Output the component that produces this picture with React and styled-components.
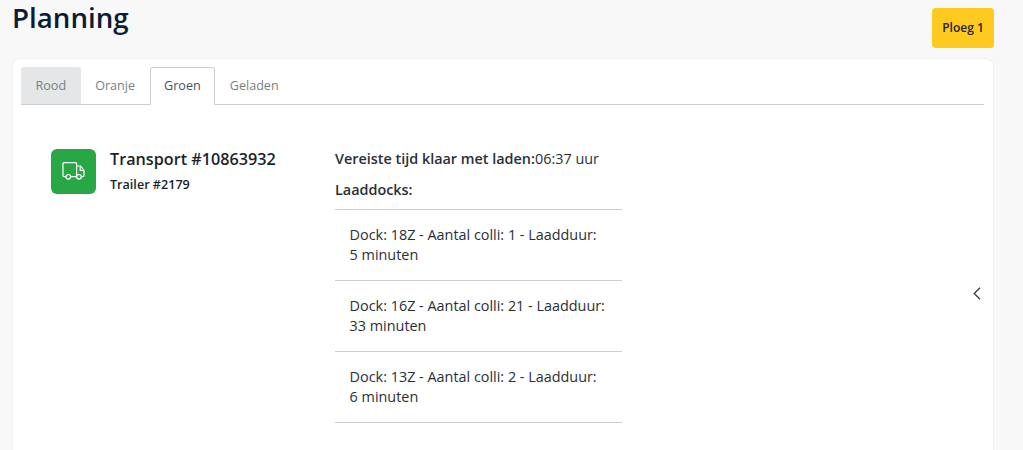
import React from 'react'
import styled, { createGlobalStyle } from 'styled-components'

const GlobalStyle = createGlobalStyle`
  html, body {
    margin: 0;
    padding: 0;
    height: 450px;
    overflow: hidden;
    background: #f8f8f8;
    font-family: "Open Sans", "Liberation Sans", sans-serif;
    color: #212529;
  }
`

const Page = styled.div`
  display: flex;
  flex-direction: column;
  gap: 10px;
  padding: 0 29px 0 12px;
  height: 450px;
  overflow: hidden;
`

const Header = styled.header`
  display: flex;
  justify-content: space-between;
  align-items: flex-start;
  height: 48px;
`

const Title = styled.h1`
  margin: 0;
  font-size: 27.7px;
  line-height: 34px;
  font-weight: 600;
  color: #0d1c36;
`

const TeamButton = styled.button`
  margin-top: 8px;
  width: 62px;
  height: 40px;
  padding: 0 0 2px;
  border: 0;
  border-radius: 4px;
  background: #ffca1f;
  color: #212529;
  font: 600 12px "Open Sans", sans-serif;
`

const Card = styled.section`
  position: relative;
  flex: 1;
  box-sizing: border-box;
  padding: 8px 9px 0 8px;
  background: #fff;
  border: 1px solid #f1f1f1;
  border-bottom: 0;
  border-radius: 8px 8px 0 0;
`

const Tabs = styled.nav`
  display: flex;
  height: 38px;
  box-sizing: border-box;
  border-bottom: 1px solid #ccced1;
`

const Tab = styled.div`
  box-sizing: border-box;
  height: ${p => (p.$active ? '38px' : '37px')};
  padding: 0 13.5px;
  line-height: 36px;
  font-size: 12.6px;
  color: ${p => (p.$active ? '#495057' : '#7a7f85')};
  background: ${p => (p.$muted ? '#e5e6e8' : p.$active ? '#fff' : 'transparent')};
  border: 1px solid ${p => (p.$active ? '#ccced1' : 'transparent')};
  border-bottom: ${p => (p.$active ? '1px solid #fff' : '0')};
  border-radius: 3px 3px 0 0;
`

const Body = styled.div`
  display: flex;
  padding: 44px 0 0 30px;
`

const Summary = styled.div`
  display: flex;
  gap: 14px;
  width: 284px;
  flex-shrink: 0;
`

const IconTile = styled.div`
  display: flex;
  align-items: center;
  justify-content: center;
  width: 45px;
  height: 45px;
  border-radius: 6px;
  background: #28a745;
  color: #fff;
`

const TransportName = styled.div`
  font-size: 16.2px;
  line-height: 20px;
  font-weight: 600;
  color: #1a1f29;
`

const TrailerName = styled.div`
  margin-top: 7px;
  font-size: 12.6px;
  line-height: 17px;
  font-weight: 600;
  color: #1a1f29;
`

const Details = styled.div`
  width: 287px;
`

const Label = styled.div`
  margin-top: ${p => p.$gap || 0}px;
  font-size: 14.4px;
  line-height: 19px;
  font-weight: 600;
  color: #2a2f36;
  & > span {
    font-weight: 400;
  }
`

const DockList = styled.ul`
  list-style: none;
  margin: 10px 0 0;
  padding: 0;
  border-top: 1px solid #ccced1;
`

const Dock = styled.li`
  padding: 15px 16px 15px 14.6px;
  font-size: 14.4px;
  line-height: 20px;
  color: #2a2f36;
  border-bottom: 1px solid #ccced1;
`

const PrevButton = styled.div`
  position: absolute;
  left: 960px;
  top: 228px;
  display: flex;
  color: #333;
`

const docks = [
  { id: '18Z', colli: 1, minutes: 5 },
  { id: '16Z', colli: 21, minutes: 33 },
  { id: '13Z', colli: 2, minutes: 6 }
]

function App() {
  return (
    <Page>
      <GlobalStyle />
      <Header>
        <Title>Planning</Title>
        <TeamButton>Ploeg 1</TeamButton>
      </Header>
      <Card>
        <Tabs>
          <Tab $muted>Rood</Tab>
          <Tab>Oranje</Tab>
          <Tab $active>Groen</Tab>
          <Tab>Geladen</Tab>
        </Tabs>
        <Body>
          <Summary>
            <IconTile>
              <svg width="23" height="23" viewBox="0 0 23 23" fill="none" stroke="currentColor" strokeWidth="1.2" strokeLinejoin="round">
                <path d="M3.9 16.6H2A1 1 0 0 1 1 15.6V3.6A1 1 0 0 1 2 2.6H13.6A1 1 0 0 1 14.6 3.6V16.6H8.7" />
                <path d="M14.6 6H18.6L22 10.5V15.6A1 1 0 0 1 21 16.6H19.4M14.6 16.6H14.8" />
                <path d="M18.2 6.2V10.5H22" />
                <circle cx="6.3" cy="16.8" r="2.3" />
                <circle cx="17" cy="16.8" r="2.3" />
              </svg>
            </IconTile>
            <div>
              <TransportName>Transport #10863932</TransportName>
              <TrailerName>Trailer #2179</TrailerName>
            </div>
          </Summary>
          <Details>
            <Label>Vereiste tijd klaar met laden:<span>06:37 uur</span></Label>
            <Label $gap={12}>Laaddocks:</Label>
            <DockList>
              {docks.map(dock => (
                <Dock key={dock.id}>
                  Dock: {dock.id} - Aantal colli: {dock.colli} - Laadduur: {dock.minutes} minuten
                </Dock>
              ))}
            </DockList>
          </Details>
        </Body>
        <PrevButton>
          <svg width="8" height="13" viewBox="0 0 8 13" fill="none" stroke="currentColor" strokeWidth="1.2">
            <path d="M7 .8 1.2 6.5 7 12.2" />
          </svg>
        </PrevButton>
      </Card>
    </Page>
  )
}

export default App
